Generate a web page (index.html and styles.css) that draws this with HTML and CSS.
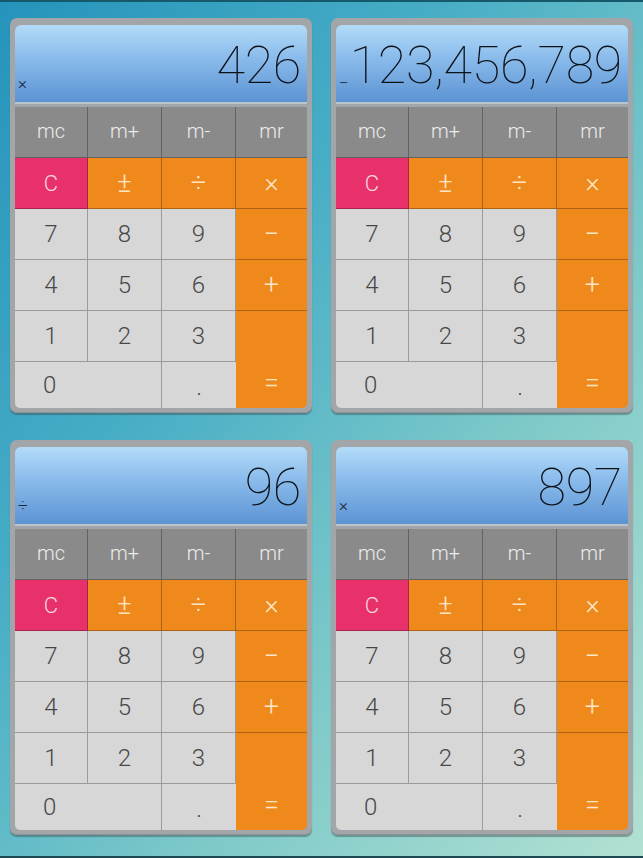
FILE: index.html
```html
<!DOCTYPE html>
<html>
<head>
<meta charset="utf-8">
<link rel="stylesheet" href="styles.css">
</head>
<body>
<div class="screen">
  <div class="calc">
    <div class="display"><span class="op">×</span><span class="num">426</span></div>
    <div class="keys">
      <div class="key mem">mc</div><div class="key mem">m+</div><div class="key mem">m-</div><div class="key mem last">mr</div>
      <div class="key clear">C</div><div class="key orange">±</div><div class="key orange">÷</div><div class="key orange last">×</div>
      <div class="key num">7</div><div class="key num">8</div><div class="key num">9</div><div class="key orange last">−</div>
      <div class="key num">4</div><div class="key num">5</div><div class="key num">6</div><div class="key orange last">+</div>
      <div class="key num">1</div><div class="key num">2</div><div class="key num">3</div><div class="key orange last eq">=</div>
      <div class="key num zero">0</div><div class="key num dot">.</div>
    </div>
  </div>
  <div class="calc">
    <div class="display"><span class="op">−</span><span class="num">123,456,789</span></div>
    <div class="keys">
      <div class="key mem">mc</div><div class="key mem">m+</div><div class="key mem">m-</div><div class="key mem last">mr</div>
      <div class="key clear">C</div><div class="key orange">±</div><div class="key orange">÷</div><div class="key orange last">×</div>
      <div class="key num">7</div><div class="key num">8</div><div class="key num">9</div><div class="key orange last">−</div>
      <div class="key num">4</div><div class="key num">5</div><div class="key num">6</div><div class="key orange last">+</div>
      <div class="key num">1</div><div class="key num">2</div><div class="key num">3</div><div class="key orange last eq">=</div>
      <div class="key num zero">0</div><div class="key num dot">.</div>
    </div>
  </div>
  <div class="calc">
    <div class="display"><span class="op">÷</span><span class="num">96</span></div>
    <div class="keys">
      <div class="key mem">mc</div><div class="key mem">m+</div><div class="key mem">m-</div><div class="key mem last">mr</div>
      <div class="key clear">C</div><div class="key orange">±</div><div class="key orange">÷</div><div class="key orange last">×</div>
      <div class="key num">7</div><div class="key num">8</div><div class="key num">9</div><div class="key orange last">−</div>
      <div class="key num">4</div><div class="key num">5</div><div class="key num">6</div><div class="key orange last">+</div>
      <div class="key num">1</div><div class="key num">2</div><div class="key num">3</div><div class="key orange last eq">=</div>
      <div class="key num zero">0</div><div class="key num dot">.</div>
    </div>
  </div>
  <div class="calc">
    <div class="display"><span class="op">×</span><span class="num">897</span></div>
    <div class="keys">
      <div class="key mem">mc</div><div class="key mem">m+</div><div class="key mem">m-</div><div class="key mem last">mr</div>
      <div class="key clear">C</div><div class="key orange">±</div><div class="key orange">÷</div><div class="key orange last">×</div>
      <div class="key num">7</div><div class="key num">8</div><div class="key num">9</div><div class="key orange last">−</div>
      <div class="key num">4</div><div class="key num">5</div><div class="key num">6</div><div class="key orange last">+</div>
      <div class="key num">1</div><div class="key num">2</div><div class="key num">3</div><div class="key orange last eq">=</div>
      <div class="key num zero">0</div><div class="key num dot">.</div>
    </div>
  </div>
</div>
</body>
</html>
```
FILE: styles.css
```css
html, body {
  margin: 0;
  padding: 0;
}
body {
  width: 643px;
  height: 858px;
  box-sizing: border-box;
  border-top: 2px solid #15596b;
  border-bottom: 2px solid #1d4a52;
  background: linear-gradient(to bottom right, #2593bb 0%, #48aec6 35%, #7dc9c9 65%, #b2e1d2 100%);
  font-family: Roboto, "Liberation Sans", sans-serif;
  overflow: hidden;
}
.screen {
  display: grid;
  grid-template-columns: 302px 302px;
  grid-template-rows: 395px 395px;
  column-gap: 19px;
  row-gap: 27px;
  padding: 16px 0 0 10px;
}
.calc {
  background: #a3a6a8;
  border-radius: 7px;
  padding: 7px 5px 5px 5px;
  box-shadow: 0 2px 1px rgba(60, 70, 75, 0.45), inset 0 -1px 0 #8f9396;
  display: flex;
  flex-direction: column;
}
.display {
  height: 77px;
  box-sizing: border-box;
  border-radius: 6px 6px 0 0;
  background: linear-gradient(to bottom, #b3dbf8 0%, #8cbdec 40%, #5c93d3 100%);
  box-shadow: 0 2px 0 #bcc4cb;
  display: flex;
  justify-content: space-between;
  align-items: flex-end;
  padding: 0 6px 11px 3px;
  margin-bottom: 5px;
}
.op {
  font-size: 17px;
  line-height: 15px;
  color: #1b2a40;
  font-weight: 300;
}
.num {
  font-size: 52px;
  line-height: 50px;
  font-weight: 100;
  color: #0d1118;
  letter-spacing: -0.3px;
}
.keys {
  display: grid;
  grid-template-columns: 73px 74px 74px 71px;
  grid-template-rows: 51px 51px 51px 51px 51px 46px;
  border-radius: 0 0 5px 5px;
  overflow: hidden;
}
.key {
  box-sizing: border-box;
  display: flex;
  align-items: center;
  justify-content: center;
  border-right: 1px solid rgba(0, 0, 0, 0.28);
  border-bottom: 1px solid rgba(0, 0, 0, 0.28);
  font-weight: 300;
}
.key.last {
  border-right: none;
}
.mem {
  background: #8a8a8a;
  color: #ececec;
  font-size: 20px;
  padding-bottom: 2px;
}
.clear {
  background: #e8306a;
  color: #f7d6e0;
  font-size: 22px;
}
.orange {
  background: #ef891c;
  color: #fde6c6;
  font-size: 27px;
  font-weight: 300;
}
.num.key {
  background: #d7d7d7;
  color: #474747;
  font-size: 24px;
  font-weight: 300;
  line-height: normal;
  letter-spacing: 0;
}
.eq {
  grid-column: 4;
  grid-row: 5 / span 2;
  border-bottom: none;
  padding-top: 46px;
}
.zero {
  grid-column: 1 / span 2;
  justify-content: flex-start;
  padding-left: 28px;
  border-bottom: none !important;
}
.dot {
  border-bottom: none !important;
  border-right: none !important;
  padding-top: 4px;
}
```
